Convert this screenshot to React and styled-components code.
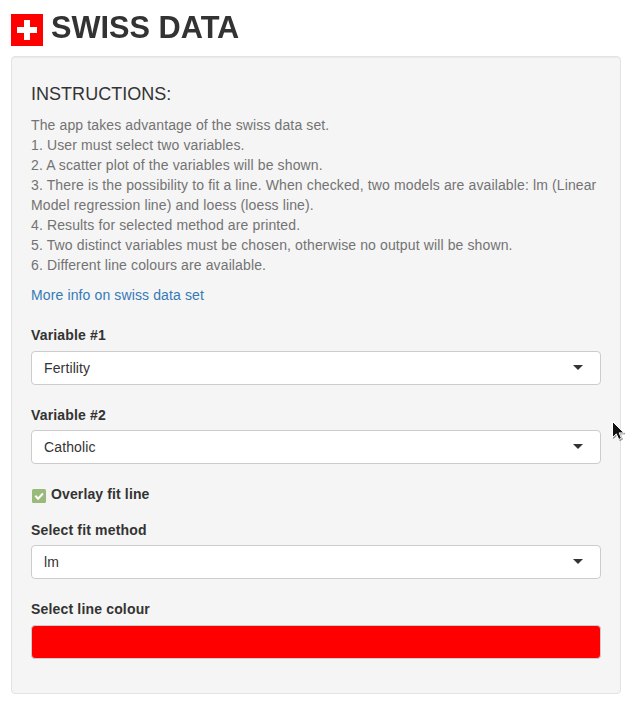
import React from "react";
import styled, { createGlobalStyle } from "styled-components";

const GlobalStyle = createGlobalStyle`
  * { box-sizing: border-box; }
  body {
    margin: 0;
    background: #fff;
    color: #333;
    font: 14px/20px "Liberation Sans", Arial, sans-serif;
    letter-spacing: 0.125px;
  }
`;

const Page = styled.main`
  position: relative;
  width: 632px;
  height: 711px;
  overflow: hidden;
  padding: 9px 11px 0;
`;

const Header = styled.header`
  display: flex;
  gap: 8px;
  height: 47px;
`;

const Flag = styled.svg`
  width: 32px;
  height: 32px;
  margin-top: 5px;
`;

const Title = styled.h1`
  margin: 0;
  font-size: 32px;
  line-height: 36px;
  font-weight: 700;
  letter-spacing: 0;
  transform: scaleX(0.96);
  transform-origin: left;
`;

const Panel = styled.section`
  width: 610px;
  height: 638px;
  padding: 27px 19px 0;
  background: #f5f5f5;
  border: 1px solid #e3e3e3;
  border-radius: 4px;
  box-shadow: inset 0 1px 1px rgba(0, 0, 0, 0.05);
`;

const Heading = styled.h4`
  margin: 0 0 11px;
  font-size: 18px;
  line-height: 20px;
  font-weight: 400;
  letter-spacing: 0.03px;
`;

const Instructions = styled.p`
  margin: 0 0 10px;
  color: #737373;
`;

const InfoLink = styled.a`
  display: block;
  color: #337ab7;
  text-decoration: none;
`;

const Field = styled.div`
  margin-top: ${({ $gap }) => $gap}px;
`;

const Label = styled.label`
  display: block;
  font-weight: 700;
  letter-spacing: 0.17px;
  margin-bottom: ${({ $space = 5 }) => $space}px;
`;

const Select = styled.div`
  display: flex;
  align-items: center;
  justify-content: space-between;
  height: 34px;
  padding: 0 17px 0 12px;
  background: #fff;
  border: 1px solid #ccc;
  border-radius: 4px;
`;

const Caret = styled.span`
  border: 5px solid transparent;
  border-top-color: #333;
  border-bottom: 0;
  margin-bottom: 2px;
`;

const CheckRow = styled.div`
  display: flex;
  gap: 5px;
  margin-top: 20px;
  font-weight: 700;
`;

const CheckIcon = styled.svg`
  width: 14px;
  height: 14px;
  margin: 5px 0 0 1px;
`;

const ColourInput = styled.div`
  height: 34px;
  background: #f00;
  border: 1px solid #ccc;
  border-radius: 4px;
`;

const Pointer = styled.svg`
  position: absolute;
  left: 611px;
  top: 420px;
  width: 14px;
  height: 21px;
  filter: drop-shadow(1px 1px 0.5px rgba(0, 0, 0, 0.4));
`;

const steps = [
  "The app takes advantage of the swiss data set.",
  "1. User must select two variables.",
  "2. A scatter plot of the variables will be shown.",
  "3. There is the possibility to fit a line. When checked, two models are available: lm (Linear Model regression line) and loess (loess line).",
  "4. Results for selected method are printed.",
  "5. Two distinct variables must be chosen, otherwise no output will be shown.",
  "6. Different line colours are available.",
];

function Dropdown({ label, value, gap, space }) {
  return (
    <Field $gap={gap}>
      <Label $space={space}>{label}</Label>
      <Select>{value}<Caret /></Select>
    </Field>
  );
}

export default function App() {
  return (
    <>
      <GlobalStyle />
      <Page>
        <Header>
          <Flag viewBox="0 0 32 32">
            <path fill="#f00" d="M0 0h32v32H0z" />
            <path fill="#fff" d="M13 6h6v7h7v6h-7v7h-6v-7H6v-6h7z" />
          </Flag>
          <Title>SWISS DATA</Title>
        </Header>
        <Panel>
          <Heading>INSTRUCTIONS:</Heading>
          <Instructions>
            {steps.map((s) => <React.Fragment key={s}>{s}<br /></React.Fragment>)}
          </Instructions>
          <InfoLink>More info on swiss data set</InfoLink>
          <Dropdown label="Variable #1" value="Fertility" gap={20} space={6} />
          <Dropdown label="Variable #2" value="Catholic" gap={20} />
          <CheckRow>
            <CheckIcon viewBox="0 0 14 14">
              <rect width="14" height="14" rx="1.5" fill="#9aba7b" />
              <path d="M3.3 6.8l2.8 2.9 4.8-5.2" fill="none" stroke="#fff" strokeWidth="2" />
            </CheckIcon>
            Overlay fit line
          </CheckRow>
          <Dropdown label="Select fit method" value="lm" gap={16} />
          <Field $gap={20}>
            <Label $space={6}>Select line colour</Label>
            <ColourInput />
          </Field>
        </Panel>
        <Pointer viewBox="0 0 14 21">
          <path d="M1.5 1.5v16l3.8-3.6 2.5 5.6 2.7-1.2-2.4-5.4H13z" fill="#111" stroke="#fff" />
        </Pointer>
      </Page>
    </>
  );
}
